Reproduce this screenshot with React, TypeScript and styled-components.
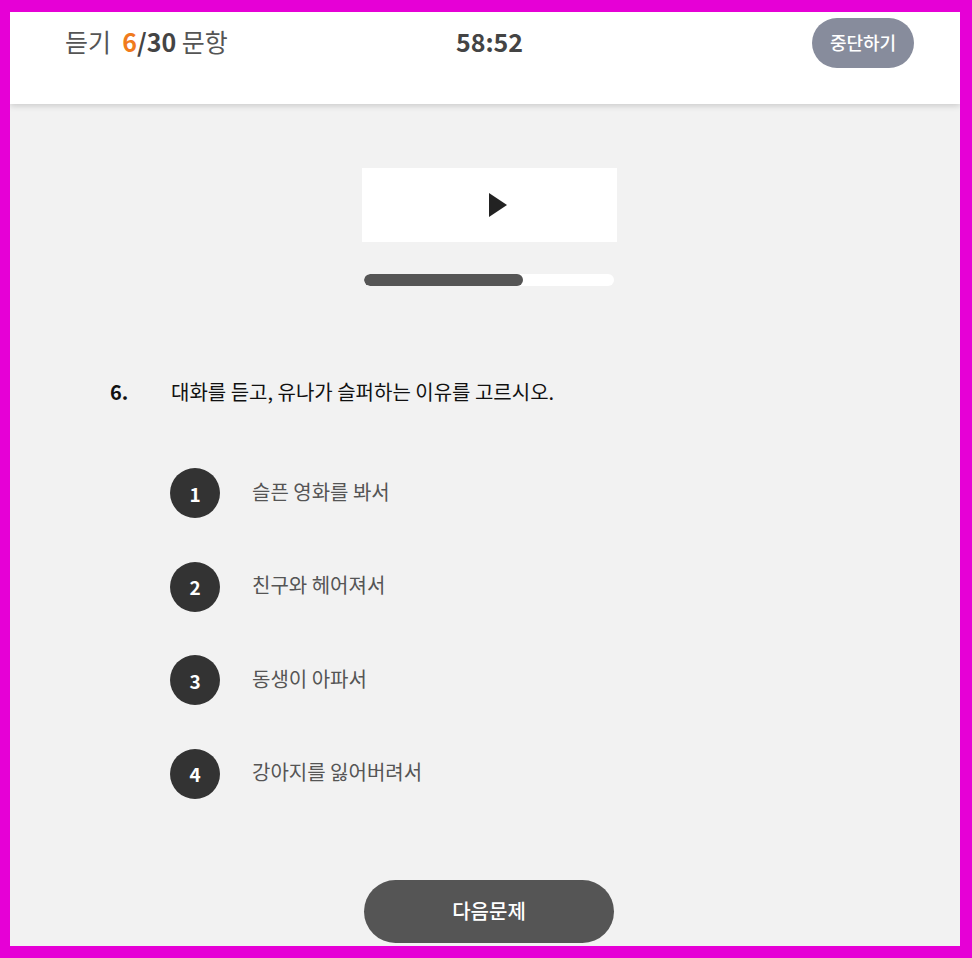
import React from "react";
import styled, { createGlobalStyle } from "styled-components";

const Global = createGlobalStyle`
  html, body { margin: 0; padding: 0; }
  body {
    background: #e600d6;
    font-family: "Noto Sans CJK KR", "Noto Sans", sans-serif;
  }
  * { box-sizing: border-box; }
`;

const Frame = styled.div`
  margin: 12px 12px 12px 10px;
  height: 934px;
  background: #f2f2f2;
  display: flex;
  flex-direction: column;
  overflow: hidden;
`;

const Header = styled.header`
  height: 92px;
  flex: none;
  background: #fff;
  box-shadow: 0 2px 6px rgba(0, 0, 0, 0.16);
  display: grid;
  grid-template-columns: 1fr auto 1fr;
  align-items: start;
  padding: 6px 46px 0 55px;
  position: relative;
  z-index: 1;
`;

const Title = styled.div`
  font-size: 25px;
  color: #555;
  line-height: 50px;
  margin-top: -2px;
`;

const Strong = styled.b<{ $accent?: boolean }>`
  font-weight: 700;
  color: ${(p) => (p.$accent ? "#f07b1d" : "#444")};
`;

const Timer = styled.div`
  font-size: 25px;
  font-weight: 700;
  color: #444;
  line-height: 50px;
  margin-top: -2px;
`;

const StopButton = styled.button`
  justify-self: end;
  width: 102px;
  height: 50px;
  border: none;
  border-radius: 25px;
  background: #878c9c;
  color: #fff;
  font-family: inherit;
  font-size: 18px;
  font-weight: 500;
  padding: 0 0 3px;
  cursor: pointer;
`;

const Main = styled.main`
  flex: 1;
  display: flex;
  flex-direction: column;
`;

const Player = styled.section`
  display: flex;
  flex-direction: column;
  align-items: center;
  padding: 64px 0 0 8px;
`;

const PlayBox = styled.button`
  width: 255px;
  height: 74px;
  background: #fff;
  border: none;
  display: flex;
  align-items: center;
  justify-content: center;
  padding: 0 0 0 17px;
  cursor: pointer;
`;

const Track = styled.div`
  margin-top: 32px;
  width: 250px;
  height: 12px;
  border-radius: 6px;
  background: #fff;
  overflow: hidden;
`;

const Fill = styled.div`
  height: 100%;
  background: #555;
  border-radius: 6px;
`;

const Question = styled.div`
  margin: 92px 0 0 100px;
  display: flex;
  align-items: center;
  font-size: 20px;
  line-height: 28px;
  color: #111;
`;

const QNum = styled.span`
  width: 61px;
  font-weight: 700;
`;

const Options = styled.ol`
  list-style: none;
  margin: 62px 0 0 160px;
  padding: 0;
  display: flex;
  flex-direction: column;
  gap: 43.5px;
`;

const Option = styled.li`
  display: flex;
  align-items: center;
  gap: 32px;
  height: 50px;
  font-size: 20px;
  color: #555;
  padding-bottom: 4px;
`;

const Circle = styled.span`
  width: 50px;
  height: 50px;
  flex: none;
  margin-top: 4px;
  border-radius: 50%;
  background: #333;
  color: #fff;
  font-weight: 700;
  font-size: 19px;
  display: flex;
  align-items: center;
  justify-content: center;
`;

const Footer = styled.div`
  margin-top: auto;
  padding: 0 0 3px 8px;
  display: flex;
  justify-content: center;
`;

const NextButton = styled.button`
  width: 250px;
  height: 63px;
  border: none;
  border-radius: 32px;
  background: #555;
  color: #fff;
  font-family: inherit;
  font-size: 20px;
  font-weight: 500;
  padding: 0 0 2px;
  cursor: pointer;
`;

const options = ["슬픈 영화를 봐서", "친구와 헤어져서", "동생이 아파서", "강아지를 잃어버려서"];

export default function App() {
  const progress = 0.636;
  return (
    <>
      <Global />
      <Frame>
        <Header>
          <Title>
            듣기&nbsp; <Strong $accent>6</Strong>
            <Strong>/30</Strong> 문항
          </Title>
          <Timer>58:52</Timer>
          <StopButton>중단하기</StopButton>
        </Header>
        <Main>
          <Player>
            <PlayBox aria-label="재생">
              <svg width="18" height="24" viewBox="0 0 18 24">
                <polygon points="0,0 18,12 0,24" fill="#222" />
              </svg>
            </PlayBox>
            <Track>
              <Fill style={{ width: `${progress * 100}%` }} />
            </Track>
          </Player>
          <Question>
            <QNum>6.</QNum>
            <span>대화를 듣고, 유나가 슬퍼하는 이유를 고르시오.</span>
          </Question>
          <Options>
            {options.map((o, i) => (
              <Option key={o}>
                <Circle>{i + 1}</Circle>
                {o}
              </Option>
            ))}
          </Options>
          <Footer>
            <NextButton>다음문제</NextButton>
          </Footer>
        </Main>
      </Frame>
    </>
  );
}
